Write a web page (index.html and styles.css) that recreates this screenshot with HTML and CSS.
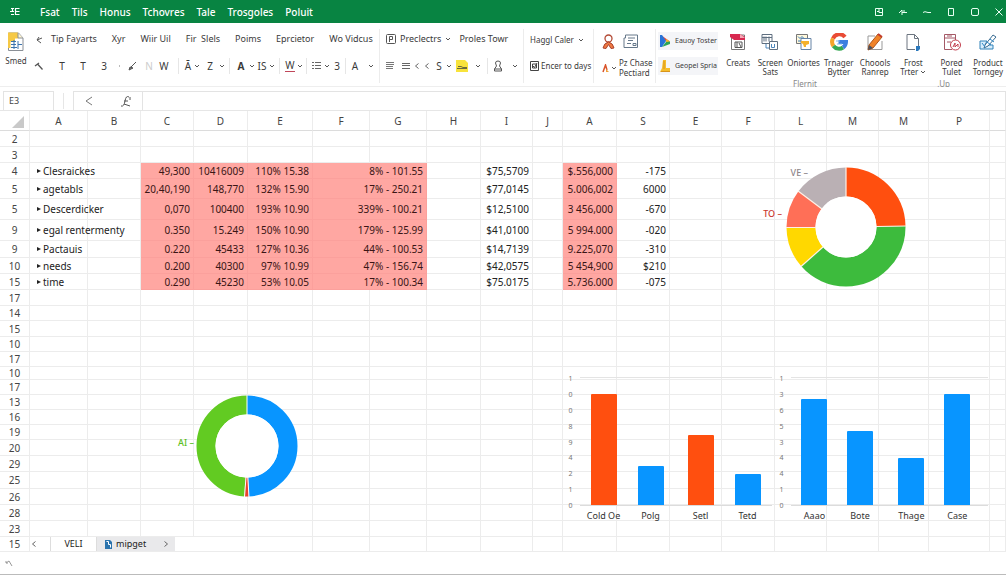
FILE: index.html
```html
<!DOCTYPE html>
<html lang="en">
<head>
<meta charset="utf-8">
<title>Spreadsheet</title>
<link rel="stylesheet" href="styles.css">
</head>
<body>
<svg class="defs" aria-hidden="true">
  <symbol id="chev" viewBox="0 0 6 6"><path d="M1 2l2 2 2-2" fill="none" stroke="currentColor"/></symbol>
  <symbol id="left" viewBox="0 0 6 8"><path d="M4.500 1.500L1.500 4l3 2.500" fill="none" stroke="currentColor"/></symbol>
</svg>

<header class="titlebar">
  <button class="app" aria-label="Apps"><svg width="10" height="9" viewBox="0 0 10 9"><path d="M1 1.500h3M5.500 1.500h4M0 4.500h4M5.500 4.500h4M1 7.500h3M5.500 7.500h4M5.500 1v7M2.500 1v4" stroke="#fff" stroke-width="1.200" fill="none"/></svg></button>
  <nav class="menu">
    <a href="#">Fsat</a><a href="#">Tils</a><a href="#">Honus</a><a href="#">Tchovres</a><a href="#">Tale</a><a href="#">Trosgoles</a><a href="#">Poluit</a>
  </nav>
  <div class="window">
    <button aria-label="Layout"><svg width="10" height="10" viewBox="0 0 10 10"><path d="M1.500 1.500h7v7h-7zM5 1.500v4h3.500M3 4.500h2"/></svg></button>
    <button aria-label="Pin"><svg width="10" height="10" viewBox="0 0 10 10"><path d="M1 6l3-3v5M4 5.500h5M6 3v3"/></svg></button>
    <button aria-label="Minimize"><svg width="10" height="10" viewBox="0 0 10 10"><path d="M1 5.500l2-.8 3 .8h3"/></svg></button>
    <button aria-label="Restore"><svg width="10" height="10" viewBox="0 0 10 10"><path d="M2.500 1.500h5v7h-5z"/></svg></button>
    <button aria-label="Maximize"><svg width="10" height="10" viewBox="0 0 10 10"><rect x="1.500" y="1.500" width="7" height="7" rx="1.500"/></svg></button>
    <button aria-label="Close"><svg width="10" height="10" viewBox="0 0 10 10"><path d="M1.500 1.500l7 7M8.500 1.500l-7 7"/></svg></button>
  </div>
</header>

<section class="ribbon">
  <div class="group saved">
    <button class="save">
      <svg width="18" height="20" viewBox="0 0 18 20"><path d="M1.500 1h10l4.500 5v12.500h-14.500z" fill="#fff" stroke="#8a8f96"/><path d="M1 .5h10v6H8v3H3.500V16H1z" fill="#f6c945"/><path d="M11 1v5h5" fill="#fff6d2" stroke="#8a8f96"/><path d="M4 9.500h5M4 12.500h5M4 15.500h6M7 8v9M11 9v8M11 12.500h4" stroke="#3c74ad" fill="none"/></svg>
      <span>Smed</span>
    </button>
    <button class="r1" aria-label="Back"><svg width="8" height="8" viewBox="0 0 8 8"><path d="M7 2L2 4l4 3M4 1L2 4" fill="none" stroke="#555"/></svg></button>
    <button class="r2" aria-label="Tool"><svg width="10" height="10" viewBox="0 0 10 10"><path d="M1 5l4-3M3.500 3L8.500 8.500" fill="none" stroke="#555" stroke-width="1.300"/></svg></button>
  </div>

  <div class="group stack edit">
    <div class="line names">
      <button>Tip Fayarts</button><button>Xyr</button><button>Wiir Uil</button><button>Fir&nbsp; Slels</button><button>Poims</button><button>Eprcietor</button><button>Wo Vidcus</button>
    </div>
    <div class="line tools">
      <button>T</button><button>T</button><button>3</button><i class="dot"></i>
      <button aria-label="Brush"><svg width="10" height="10" viewBox="0 0 10 10"><path d="M1 9l1-3 3 1zM3 6l5-5" fill="#777" stroke="#555"/></svg></button>
      <button class="faint">N</button><button>W</button><i class="rule"></i>
      <button>Ā</button><svg class="c"><use href="#chev"/></svg><button>Z</button><svg class="c"><use href="#chev"/></svg><i class="rule"></i>
      <button><b>A</b></button><svg class="c"><use href="#chev"/></svg><button>IS</button><svg class="c"><use href="#chev"/></svg><i class="rule"></i>
      <button class="under">W</button><svg class="c"><use href="#chev"/></svg><i class="rule"></i>
      <button aria-label="List"><svg width="9" height="9" viewBox="0 0 9 9"><path d="M0 1.500h2M3 1.500h6M0 4.500h2M3 4.500h6M0 7.500h2M3 7.500h6" stroke="#666"/></svg></button><svg class="c"><use href="#chev"/></svg><button>3</button><i class="rule"></i>
      <button>A</button><svg class="c"><use href="#chev"/></svg>
    </div>
  </div>

  <div class="group stack align">
    <div class="line names">
      <button class="withicon"><svg width="10" height="10" viewBox="0 0 10 10"><rect x=".5" y=".5" width="9" height="9" rx="1" fill="none" stroke="#555"/><path d="M3.500 8V2.500h3v3h-3" fill="none" stroke="#555"/></svg>Preclectrs<svg class="c"><use href="#chev"/></svg></button><button>Proles Towr</button>
    </div>
    <div class="line tools2">
      <button aria-label="Align left"><svg width="8" height="8" viewBox="0 0 8 8"><path d="M0 .5h8M0 2.500h8M0 4.500h7M0 6.500h7" stroke="#777"/></svg></button>
      <button aria-label="Align center"><svg width="8" height="8" viewBox="0 0 8 8"><path d="M0 1.500h8M0 3.500h8M0 6.500h8" stroke="#666"/></svg></button>
      <button aria-label="Previous"><svg class="l"><use href="#left"/></svg></button><button aria-label="First"><svg class="l"><use href="#left"/></svg></button>
      <button>S</button><svg class="c"><use href="#chev"/></svg>
      <button aria-label="Fill"><svg width="12" height="12" viewBox="0 0 12 12"><path d="M0 0h9l3 3v9H0z" fill="#f8e33c"/><path d="M2 6.500h3l2 1h4M1 8.500h10" stroke="#6b6a3c" fill="none"/></svg></button><svg class="c"><use href="#chev"/></svg><i class="rule"></i>
      <button aria-label="Stamp"><svg width="10" height="12" viewBox="0 0 10 12"><path d="M3.500 6L2.500 3q0-2 2.500-2t2.500 2l-1 3 2 3v2h-7V9zM1.500 9h7" fill="none" stroke="#555"/></svg></button><svg class="c"><use href="#chev"/></svg>
    </div>
  </div>

  <div class="group stack days">
    <div class="line names"><button class="withicon">Haggl Caler<svg class="c"><use href="#chev"/></svg></button></div>
    <div class="line"><button class="withicon small"><svg width="9" height="10" viewBox="0 0 9 10"><path d="M.5.5h8v9h-8zM2.500 3h4v4h-4zM3 5l1.500 1.500L7 2" fill="none" stroke="#444"/></svg>Encer to days</button></div>
  </div>

  <div class="group stack people">
    <div class="line">
      <button aria-label="Person"><svg width="13" height="16" viewBox="0 0 13 16"><circle cx="6.500" cy="4.500" r="3.500" fill="#fff" stroke="#b34a35" stroke-width="1.300"/><path d="M1 14q1-5 5.500-6Q11 9 12 14l-3 .5-2.500-4-2.500 4z" fill="#f07a42" stroke="#a8432f"/></svg></button>
      <button aria-label="Notes"><svg width="15" height="15" viewBox="0 0 15 15"><path d="M2.500 1h12v12.500H1V4h1.500zM5 4h7M5 6.500h5M4 9.500h4M10 9.500h3v2h-3z" fill="none" stroke="#66788a"/></svg></button>
    </div>
    <div class="line">
      <button class="withicon small"><svg width="7" height="9" viewBox="0 0 7 9"><path d="M1 8l2.500-7L5 6" fill="none" stroke="#d9542b" stroke-width="1.500"/><path d="M4 5l3 3H4z" fill="#f0a13a"/></svg><svg class="c"><use href="#chev"/></svg><span>Pz Chase<br>Pectiard</span></button>
    </div>
  </div>

  <div class="group stack store">
    <button class="chip"><svg width="11" height="12" viewBox="0 0 11 12"><path d="M1 0l9 6.500H6z" fill="#e8453c"/><path d="M0 0h2l4 6-4 6H0z" fill="#2874d8"/><path d="M6 4l4 2.500L6 9z" fill="#f5b82a"/><path d="M2 12l4-5 4-.5V9z" fill="#2aa55a"/></svg>Eauoy Toster</button>
    <button class="chip"><svg width="11" height="12" viewBox="0 0 11 12"><path d="M3 0h3v8h4v4H0l2-4z" fill="#f6bd2c"/><path d="M4 1v8M1 11.500h9" stroke="#d8941c"/></svg>Geopel Spria</button>
  </div>

  <div class="big">
    <div class="bigset">
      <button><svg width="18" height="18" viewBox="0 0 18 18"><path d="M2.500 2h13v14.500h-13z" fill="#fff" stroke="#777"/><path d="M1 1h10l5 3v3H5L1 4z" fill="#d8284f"/><path d="M11 1l5 4h-5z" fill="#f7a8b6"/><path d="M6 9h7v5.500H6zM8 9v5M10 10l2 4" fill="none" stroke="#555"/></svg><span>Creats</span></button>
      <button><svg width="18" height="18" viewBox="0 0 18 18"><path d="M1 1.500h10v9H1zM3 3.500v5M5 3.500v5M8 3.500v5M1 4.500h10" fill="none" stroke="#5f6f80"/><path d="M8.500 8.500h8v8h-8z" fill="#fff" stroke="#5f6f80"/><path d="M10.500 11v3.500h3V11M5 11v4h3" fill="none" stroke="#4b86bd"/></svg><span>Screen<br>Sats</span></button>
      <button><svg width="18" height="18" viewBox="0 0 18 18"><path d="M1.500 1.500h11v9h-11z" fill="#fff8db" stroke="#777"/><path d="M6 5.500h10v11H6z" fill="#fff" stroke="#6684a6"/><path d="M3 3.500l2 2 2-2 2 2M3 8h3" fill="none" stroke="#3979ba"/><path d="M6 8h8v3l-3 1v2H9l-1-3-2-1z" fill="#f5b12b"/></svg><span>Oniortes</span></button>
      <button><svg width="18" height="18" viewBox="0 0 18 18"><circle cx="9" cy="9" r="8.500" fill="#fff"/><g fill="none" stroke-width="4"><path d="M15 4A7 7 0 0 0 3 5.500" stroke="#e94b35"/><path d="M3 5.500A7 7 0 0 0 3.500 13" stroke="#f4a52b"/><path d="M3.500 13A7 7 0 0 0 13 14.500" stroke="#36a853"/><path d="M13 14.500A7 7 0 0 0 16 9H8.500" stroke="#3d7fe0"/></g><path d="M6 8h4M7 11h5" stroke="#7cb4ee"/></svg><span>Trnager<br>Bytter</span></button>
      <button><svg width="18" height="18" viewBox="0 0 18 18"><path d="M9 3H2v13.500h14V8" fill="#fff" stroke="#999"/><path d="M3 12L12 1l4 3L7 15l-5 2z" fill="#f08328" stroke="#ae5720"/><path d="M3 12l4 3-5 2z" fill="#4a5260"/><path d="M12 1l4 3" stroke="#c23c2d" stroke-width="2"/></svg><span>Choools<br>Ranrep</span></button>
      <button><svg width="18" height="18" viewBox="0 0 18 18"><path d="M3 1.500h7.500l4 4v8M10.500 1.500v4h4M3 1.500v15h8" fill="none" stroke="#6c7580"/><path d="M12 13h4v3l-2 2h-2z" fill="#2b79bd"/></svg><span>Frost<br>Trter <svg class="c"><use href="#chev"/></svg></span></button>
      <button><svg width="18" height="18" viewBox="0 0 18 18"><path d="M9 16.500H1.500v-15h11v6M1.500 5h11M4 9h4M4 3h5" fill="none" stroke="#a55966"/><circle cx="12.500" cy="12" r="5" fill="#fff" stroke="#c13d4c"/><path d="M10 14l2-4v4l3-3v3" fill="none" stroke="#c13d4c"/></svg><span>Pored<br>Tulet</span></button>
      <button><svg width="18" height="18" viewBox="0 0 18 18"><path d="M1 8h7l-2 4h8v4H1z" fill="#d8edfb" stroke="#3182b9"/><path d="M6 12L14 2l3 2-8 9-4 2z" fill="#fff" stroke="#386b91"/><path d="M8 9l4 3M11 6l4 3M3 10l3 4" stroke="#2c88c7"/></svg><span>Product<br>Torngey</span></button>
    </div>
    <div class="captions"><span>Flernit</span><span>.Up</span></div>
  </div>
</section>

<section class="formula">
  <input class="namebox" aria-label="Name box" value="E3">
  <i class="rule"></i>
  <div class="fx">
    <button aria-label="Cancel"><svg width="8" height="10" viewBox="0 0 8 10"><path d="M7 1L1 5l6 4" fill="none" stroke="#777"/></svg></button>
    <button aria-label="Function"><svg width="10" height="11" viewBox="0 0 10 11"><path d="M0 10q3 1 4-5t4-4M3 5h4M3 8l6 2M9 1v3" fill="none" stroke="#555"/></svg></button>
  </div>
  <input class="entry" aria-label="Formula">
</section>

<main class="sheet">
  <table class="grid">
    <colgroup><col class="w30"><col class="w58"><col class="w53"><col class="w53"><col class="w54"><col class="w65"><col class="w57"><col class="w57"><col class="w54"><col class="w52"><col class="w30"><col class="w54"><col class="w53"><col class="w52"><col class="w53"><col class="w52"><col class="w52"><col class="w50"><col class="w61"><col></colgroup>
    <thead><tr><th><svg class="corner" width="12" height="12" viewBox="0 0 12 12"><path d="M12 0v12H0z" fill="#c9c9c9"/></svg></th><th>A</th><th>B</th><th>C</th><th>D</th><th>E</th><th>F</th><th>G</th><th>H</th><th>I</th><th>J</th><th>A</th><th>S</th><th>E</th><th>F</th><th>L</th><th>M</th><th>M</th><th>P</th><th></th></tr></thead>
    <tbody id="rows"></tbody>
  </table>

  <figure class="donut large">
    <figcaption><span class="grey">VE –</span><span class="red">TO –</span></figcaption>
    <svg width="120" height="120" viewBox="0 0 120 120">
      <g transform="rotate(-90 60 60)" fill="none" stroke-width="29">
        <circle cx="60" cy="60" r="45" pathLength="360" stroke="#ff4f0f" stroke-dasharray="89 271"/>
        <circle cx="60" cy="60" r="45" pathLength="360" stroke="#3dbb3d" stroke-dasharray="140 220" stroke-dashoffset="-89"/>
        <circle cx="60" cy="60" r="45" pathLength="360" stroke="#ffd800" stroke-dasharray="40 320" stroke-dashoffset="-229"/>
        <circle cx="60" cy="60" r="45" pathLength="360" stroke="#ff6f57" stroke-dasharray="38 322" stroke-dashoffset="-269"/>
        <circle cx="60" cy="60" r="45" pathLength="360" stroke="#bab0b4" stroke-dasharray="53 307" stroke-dashoffset="-307"/>
      </g>
      <circle cx="60" cy="60" r="30.500" fill="#fff"/>
      <path d="M60 0v30M90 59.500l30-.5M37 80L15 99.500M30 60.500H0M36 42L12 24" stroke="#fff0e6" stroke-width="1.200"/>
    </svg>
  </figure>

  <figure class="donut small-ring">
    <figcaption>AI –</figcaption>
    <svg width="102" height="102" viewBox="0 0 102 102">
      <g transform="rotate(-90 51 51)" fill="none" stroke-width="19">
        <circle cx="51" cy="51" r="41" pathLength="360" stroke="#0895ff" stroke-dasharray="178 182"/>
        <circle cx="51" cy="51" r="41" pathLength="360" stroke="#e8432f" stroke-dasharray="5 355" stroke-dashoffset="-178"/>
        <circle cx="51" cy="51" r="41" pathLength="360" stroke="#62cb22" stroke-dasharray="177 183" stroke-dashoffset="-183"/>
      </g>
      <circle cx="51" cy="51" r="31.500" fill="#fff"/>
      <path d="M51 0v20M51.800 82l1.200 20M50 82l-1.500 20" stroke="#fff" stroke-width="1"/>
    </svg>
  </figure>

  <figure class="bars first" id="chart1"></figure>
  <figure class="bars second" id="chart2"></figure>
</main>

<footer class="status"><svg width="8" height="8" viewBox="0 0 8 8"><path d="M1 4l3-2 3 5M1 2v2h2" fill="none" stroke="#999"/></svg></footer>
<script src="script.js"></script>
</body>
</html>
```
FILE: styles.css
```css
* { box-sizing: border-box; }
body { margin: 0; min-height: 100vh; display: flex; flex-direction: column; background: #fff; color: #333; font: 10px/12px "Noto Sans", sans-serif; overflow-x: hidden; }
button { border: 0; background: none; padding: 0; margin: 0; color: inherit; font: inherit; white-space: nowrap; }
svg { flex: none; display: block; }
figure { margin: 0; }
i { display: block; }
.defs { display: none; }
.c { width: 6px; height: 6px; color: #555; }
.l { width: 6px; height: 8px; color: #666; }

.titlebar { height: 23px; background: #088442; color: #fff; display: flex; align-items: center; padding: 0 2px 0 10px; }
.app { width: 30px; }
.menu { display: flex; gap: 12px; flex: 1; }
.menu a { color: #fff; text-decoration: none; font-weight: 500; line-height: 14px; }
.window { display: flex; gap: 14px; }
.window svg { fill: none; stroke: #e9fff2; }

.ribbon { height: 64px; display: flex; border-bottom: 1px solid #eee; color: #3a3a3a; }
.group { height: 54px; margin-top: 6px; border-right: 1px solid #ececec; flex: none; }
.saved { width: 51px; border: 0; display: grid; grid-template-columns: 32px 14px; grid-template-rows: 21px 31px; justify-items: center; align-items: center; }
.save { grid-row: 1 / 3; display: flex; flex-direction: column; align-items: center; gap: 4px; font-size: 8px; line-height: 10px; padding-bottom: 12px; }
.stack { display: flex; flex-direction: column; }
.line { height: 25px; flex: none; display: flex; align-items: center; }
.line.names { height: 19px; margin-bottom: 1px; font-size: 9px; }
.stack .line + .line { height: 33px; }
.edit { width: 329px; }
.edit .names { gap: 15px; }
.rule { width: 1px; height: 16px; background: #e6e6e6; justify-self: center; }
.dot { width: 1px; height: 2px; background: #bbb; }
.tools { display: grid; grid-template-columns: 22px 20px 22px 8px 20px 12px 18px 10px 10px 8px 18px 6px 8px 16px 6px 14px 6px 8px 14px 6px 6px 14px 8px 12px 4px 16px 16px; justify-items: center; }
.tools svg, .tools2 svg { margin: auto; }
.faint { color: #ccc; }
.under { border-bottom: 1px solid #c0475a; }
.align { width: 144px; }
.align .names { gap: 8px; padding-left: 6px; }
.tools2 { display: grid; grid-template-columns: 20px 12px 10px 10px 14px 6px 20px 12px 6px 16px 18px; justify-items: center; }
.withicon { display: flex; align-items: center; gap: 4px; text-align: left; }
.small { font-size: 8px; line-height: 10px; gap: 2px; }
.days { width: 70px; padding-left: 6px; }
.days .names { height: 22px; font-size: 8px; }
.days .line + .line { height: 27px; }
.people { width: 62px; padding-left: 8px; }
.people .line { gap: 8px; }
.people .line + .line { height: 28px; }
.people .small { gap: 2px; }
.store { width: 66px; border: 0; gap: 7px; padding: 3px 4px 0 2px; }
.chip { height: 18px; display: flex; align-items: center; gap: 4px; padding: 0 2px; background: #f4f5f8; font-size: 7px; }
.big { flex: 1; min-width: 0; display: flex; flex-direction: column; justify-content: space-between; font-size: 8px; line-height: 9px; padding-top: 10px; }
.bigset { display: grid; grid-template-columns: 32fr 32fr 34fr 36fr 36fr 40fr 36fr 36fr; }
.bigset button { display: flex; flex-direction: column; align-items: center; gap: 7px; }
.bigset .c { display: inline-block; }
.captions { display: flex; justify-content: space-between; padding: 0 56px 0 71px; margin-bottom: -2px; color: #888; }

.formula { height: 24px; padding: 4px 0 0 3px; display: flex; align-items: stretch; background: #fff; border-bottom: 1px solid #e6e6e6; }
.formula input { border: 1px solid #e3e3e3; background: #fff; font: inherit; font-size: 9px; color: #444; padding: 0 5px; outline: 0; border-bottom: 0; min-width: 0; }
.namebox { width: 51px; }
.formula .rule { margin: 2px 9px; }
.fx { width: 69px; border: 1px solid #e3e3e3; border-width: 1px 0 0 1px; display: flex; align-items: center; justify-content: space-between; padding: 0 11px; }
.entry { flex: 1; }

.sheet { position: relative; }
.grid { width: 100%; table-layout: fixed; border-collapse: separate; border-spacing: 0; }
.w30 { width: 30px; } .w50 { width: 50px; } .w52 { width: 52px; } .w53 { width: 53px; } .w54 { width: 54px; }
.w57 { width: 57px; } .w58 { width: 58px; } .w61 { width: 61px; } .w65 { width: 65px; }
.grid th, .grid td { padding: 0 3px; border: solid #ececec; border-width: 0 1px 1px 0; white-space: nowrap; line-height: 12px; text-align: right; color: #222; }
.grid th { font-weight: 400; text-align: center; color: #444; }
.grid thead th { height: 20px; border-bottom-color: #dcdcdc; }
.grid tbody th { padding: 0; }
.grid .name { text-align: left; }
.name::before { content: ""; display: inline-block; border: solid transparent; border-width: 2px 0 2px 4px; border-left-color: #222; margin: 0 2px 2px 4px; }
.grid .hot { background: #ffa7a2; border-color: #fba09c; color: #3a1515; }
.corner { margin: 2px 0 0 9px; }
.grid td.tabcell { padding: 0; border-right: 0; }

.tabs { height: 14px; display: flex; align-items: stretch; font-size: 9px; }
.tabs button { display: flex; align-items: center; justify-content: center; }
.tabs .prev { width: 20px; padding-right: 12px; }
.tabs .active { width: 47px; background: #fff; border: solid #ddd; border-width: 0 1px; }
.tabs .other { width: 78px; background: #e9e9eb; padding: 0 6px 0 8px; gap: 4px; justify-content: flex-start; }
.tabs .next { margin-left: auto; transform: scaleX(-1); }

.donut { position: absolute; display: flex; font-size: 9px; font-weight: 500; }
.donut figcaption { display: flex; flex-direction: column; text-align: right; }
.large { left: 762px; top: 56px; gap: 4px; align-items: flex-start; }
.large figcaption { width: 20px; gap: 29px; }
.large .grey { color: #8c8589; margin-right: -26px; }
.large .red { color: #c9362c; }
.small-ring { left: 177px; top: 284px; gap: 2px; }
.small-ring figcaption { width: 17px; padding-top: 42px; color: #5cbf24; }

.bars { position: absolute; top: 266px; height: 148px; display: grid; grid-template-columns: 16px 1fr; grid-template-rows: 129px 19px; }
.bars.first { left: 564px; width: 208px; }
.bars.second { left: 775px; width: 213px; }
.axis { display: flex; flex-direction: column; justify-content: space-between; font-size: 7px; line-height: 4px; color: #777; text-align: center; padding-right: 3px; height: 131px; }
.plot, .labels { display: grid; text-align: center; }
.first .plot, .first .labels { grid-template-columns: 47fr 47fr 53fr 41fr; padding-right: 4px; }
.second .plot, .second .labels { grid-template-columns: 48fr 45fr 60fr 34fr; padding-right: 14px; }
.plot { border-top: 1px solid #e4e4e4; border-bottom: 1px solid #dcdcdc; align-items: end; justify-items: center; }
.labels { grid-column: 2; align-items: center; justify-items: center; font-size: 9px; color: #333; }
.labels span { white-space: nowrap; }
.bar { width: 26px; border-radius: 1px 1px 0 0; background: #0895ff; }
.bar.warm { background: #ff4f0f; }

.status { flex: 1; min-height: 20px; display: flex; align-items: center; padding-left: 5px; border-bottom: 1px solid #bbb; }
```
FILE: script.js
```js
const rows = [
  [16, "2"], [16, "3"],
  [16, "4", "Clesraickes", "49,300", "10416009", "110% 15.38", "8% - 101.55", "$75,5709", "$.556,000", "-175"],
  [20, "5", "agetabls", "20,40,190", "148,770", "132% 15.90", "17% - 250.21", "$77,0145", "5.006,002", "6000"],
  [21, "5", "Descerdicker", "0,070", "100400", "193% 10.90", "339% - 100.21", "$12,5100", "3 456,000", "-670"],
  [21, "9", "egal rentermenty", "0.350", "15.249", "150% 10.90", "179% - 125.99", "$41,0100", "5 994.000", "-020"],
  [17, "9", "Pactauis", "0.220", "45433", "127% 10.36", "44% - 100.53", "$14,7139", "9.225,070", "-310"],
  [16, "10", "needs", "0.200", "40300", "97% 10.99", "47% - 156.74", "$42,0575", "5 454,900", "$210"],
  [16, "15", "time", "0.290", "45230", "53% 10.05", "17% - 100.34", "$75.0175", "5.736.000", "-075"],
  [16, "17"], [15, "14"], [16, "15"], [15, "10"], [15, "17"], [13, "10"], [15, "17"], [15, "13"],
  [15, "16"], [15, "19"], [16, "20"], [16, "29"], [17, "25"], [16, "26"], [16, "28"], [16, "23"]
];
const blank = n => "<td></td>".repeat(n);
const body = rows.map(([h, n, name, c, d, e, g, i, a, s]) => {
  const cells = name
    ? `<td class="name">${name}</td><td></td><td class="hot">${c}</td><td class="hot">${d}</td><td class="hot">${e}</td><td class="hot" colspan="2">${g}</td><td></td><td>${i}</td><td></td><td class="hot">${a}</td><td>${s}</td>` + blank(7)
    : blank(19);
  return `<tr style="height:${h}px"><th>${n}</th>${cells}</tr>`;
}).join("");
const tabs = `<tr style="height:15px"><th>15</th><td class="tabcell" colspan="3"><div class="tabs">
<button class="prev" aria-label="Previous sheet"><svg class="l"><use href="#left"/></svg></button>
<button class="active">VELI</button>
<button class="other"><svg width="7" height="9" viewBox="0 0 7 9"><path d="M0 0h5l2 2v7H0z" fill="#2b73ad"/><path d="M1.500 1.500h2v3h2v3" fill="none" stroke="#fff"/></svg>mipget<svg class="l next"><use href="#left"/></svg></button>
</div></td>${blank(16)}</tr>`;
document.getElementById("rows").innerHTML = body + tabs;

function chart(id, ticks, items) {
  document.getElementById(id).innerHTML =
    `<div class="axis">${[...ticks].map(t => `<span>${t}</span>`).join("")}</div>` +
    `<div class="plot">${items.map(([, h, warm]) => `<div class="bar${warm ? " warm" : ""}" style="height:${h}px"></div>`).join("")}</div>` +
    `<div class="labels">${items.map(([t]) => `<span>${t}</span>`).join("")}</div>`;
}
chart("chart1", "100894210", [["Cold Oe", 111, true], ["Polg", 39], ["Setl", 70, true], ["Tetd", 31]]);
chart("chart2", "136534410", [["Aaao", 106], ["Bote", 74], ["Thage", 47], ["Case", 111]]);
```
